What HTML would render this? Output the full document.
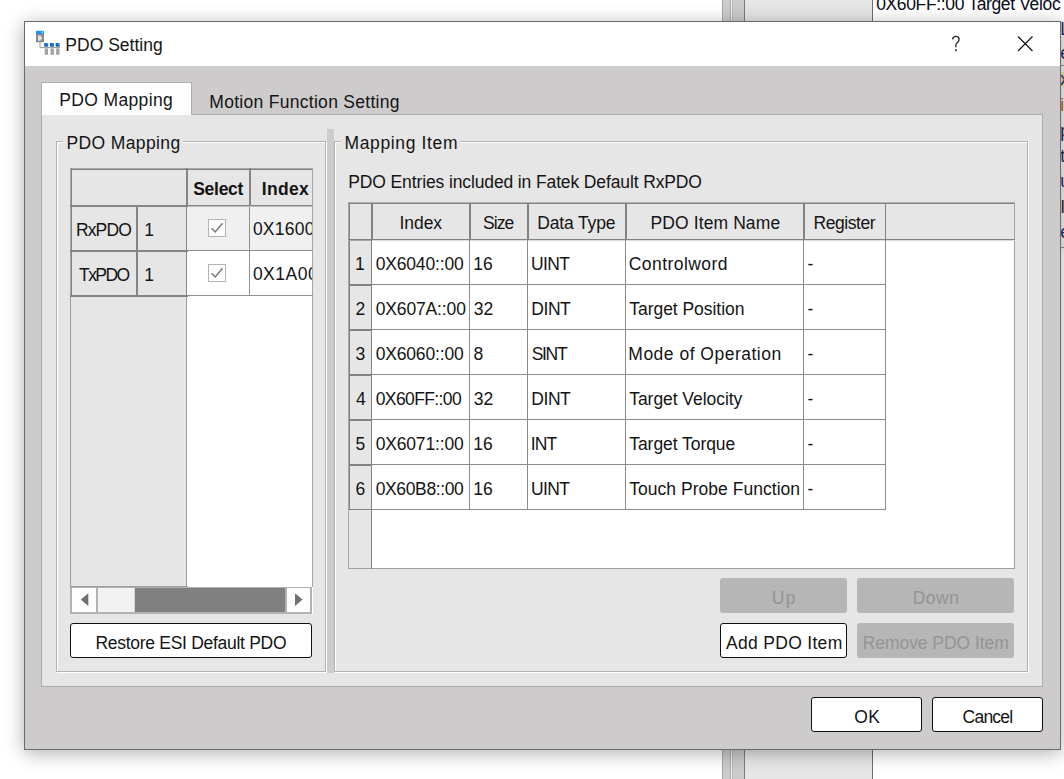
<!DOCTYPE html>
<html><head><meta charset="utf-8"><title>PDO Setting</title>
<style>
html,body{margin:0;padding:0;}
body{width:1064px;height:779px;overflow:hidden;background:#fff;position:relative;font-family:"Liberation Sans",sans-serif;}
.a{position:absolute;box-sizing:border-box;}
.t{position:absolute;white-space:nowrap;line-height:24px;height:24px;font-family:"Liberation Sans",sans-serif;}
.ln{position:absolute;background:#858585;}
.btn{position:absolute;box-sizing:border-box;background:#fff;border:1.5px solid #101010;border-radius:3px;}
.dis{position:absolute;box-sizing:border-box;background:#b6b6b6;border-radius:3px;}
</style></head><body>
<!-- background window behind dialog -->
<div class="a" style="left:722px;top:0;width:9px;height:779px;background:#cdcbcb;border-left:1px solid #a9a9a9;border-right:1px solid #a9a9a9;"></div>
<div class="a" style="left:731px;top:0;width:1px;height:779px;background:#f6f6f6;"></div>
<div class="a" style="left:732px;top:0;width:13px;height:779px;background:#cdcbcb;border-left:1px solid #b5b5b5;border-right:1px solid #7d7d7d;"></div>
<div class="a" style="left:745px;top:0;width:127px;height:779px;background:#e6e6e6;"></div>
<div class="a" style="left:872px;top:0;width:1px;height:779px;background:#6e6e6e;"></div>
<!-- right edge letter fragments -->
<div class="a" id="frag" style="left:1061px;top:0;width:3px;height:260px;overflow:hidden;">
 <div class="a" style="left:0;top:21px;width:3px;height:230px;background:#f4f4f4;"></div>
 <div class="a" style="left:0;top:72px;width:3px;height:15px;background:#f3e7a8;"></div>
 <div class="a" style="left:0;top:65px;width:3px;height:1px;background:#8a8a8a;"></div>
 <div class="a" style="left:0;top:247px;width:3px;height:1px;background:#8a8a8a;"></div>
 <span class="t" style="left:-0.7px;top:16.5px;font-size:17.5px;color:#1b2d6a;">L</span>
 <span class="t" style="left:-0.7px;top:41px;font-size:17.5px;color:#1b2d6a;">e</span>
 <span class="t" style="left:-0.7px;top:67px;font-size:17.5px;color:#1b2d6a;">x</span>
 <span class="t" style="left:-0.7px;top:92.5px;font-size:17.5px;color:#b8600f;">i</span>
 <span class="t" style="left:-0.7px;top:118.5px;font-size:17.5px;color:#1b2d6a;">p</span>
 <span class="t" style="left:-0.7px;top:143.5px;font-size:17.5px;color:#1b2d6a;">t</span>
 <span class="t" style="left:-0.7px;top:169px;font-size:17.5px;color:#1b2d6a;">u</span>
 <span class="t" style="left:-0.7px;top:194.5px;font-size:17.5px;color:#3a2a3a;">I</span>
 <span class="t" style="left:-0.7px;top:220px;font-size:17.5px;color:#1b2d6a;">e</span>
</div>

<!-- dialog -->
<div class="a" id="dlg" style="left:24px;top:21px;width:1037px;height:729px;border:1px solid #6a6a6a;background:#cdcbcb;box-shadow:0 3px 18px 0 rgba(0,0,0,0.32);"></div>
<div class="a" style="left:25px;top:22px;width:1035px;height:44px;background:#fff;"></div>

<!-- title icon -->
<svg class="a" style="left:34px;top:29px;" width="28" height="28" viewBox="0 0 28 28">
 <rect x="2" y="1.8" width="8" height="3.2" fill="#1e90ff"/>
 <rect x="7.8" y="2.6" width="1.2" height="1.2" fill="#fff"/>
 <rect x="2" y="5" width="8" height="8.3" fill="#8c8c8c"/>
 <path d="M4 6.6 H6.4 L8.2 9.1 L6.4 11.7 H4 Z" fill="#e2e2e2"/>
 <path d="M6 13.3 V18.6 H26" fill="none" stroke="#9a9a9a" stroke-width="1"/>
 <rect x="10.2" y="14" width="4" height="3.7" fill="#1565c0"/>
 <rect x="16" y="14" width="4" height="3.7" fill="#1565c0"/>
 <rect x="21.6" y="14" width="4" height="3.7" fill="#1565c0"/>
 <path d="M12.6 14.6 h1.2 v1 h-1.2z M18.4 14.6 h1.2 v1 h-1.2z M24 14.6 h1.2 v1 h-1.2z" fill="#9cc4ee"/>
 <g fill="#b5b5b5">
  <rect x="10.8" y="19.2" width="3.2" height="6.6"/>
  <rect x="16.6" y="19.2" width="3.2" height="6.6"/>
  <rect x="22.2" y="19.2" width="3.2" height="6.6"/>
 </g>
 <g fill="#8f8f8f">
  <rect x="10.8" y="20.4" width="3.2" height="0.9"/><rect x="10.8" y="22.3" width="3.2" height="0.9"/><rect x="10.8" y="24.2" width="3.2" height="0.9"/>
  <rect x="16.6" y="20.4" width="3.2" height="0.9"/><rect x="16.6" y="22.3" width="3.2" height="0.9"/><rect x="16.6" y="24.2" width="3.2" height="0.9"/>
  <rect x="22.2" y="20.4" width="3.2" height="0.9"/><rect x="22.2" y="22.3" width="3.2" height="0.9"/><rect x="22.2" y="24.2" width="3.2" height="0.9"/>
 </g>
</svg>

<!-- title buttons -->
<svg class="a" style="left:940px;top:28px;" width="110" height="32" viewBox="0 0 110 32">
 <path d="M78 8.5 L92.5 23 M92.5 8.5 L78 23" stroke="#111" stroke-width="1.2" fill="none"/>
 <path d="M12.6 11.4 C12.8 9.3 14.2 8.4 15.9 8.4 C17.9 8.4 19.1 9.6 19.1 11.3 C19.1 13 18.1 13.9 17.1 14.9 C16.2 15.8 15.8 16.6 15.8 17.6 V19.2" stroke="#222" stroke-width="1.3" fill="none"/>
 <rect x="15" y="21.4" width="1.7" height="1.7" fill="#222"/>
</svg>


<!-- tab panel -->
<div class="a" style="left:41px;top:114px;width:1002px;height:573px;background:#e6e6e6;border:1px solid #ababab;"></div>
<!-- selected tab -->
<div class="a" style="left:41px;top:82px;width:151px;height:33px;background:#fefefe;border:1px solid #adadad;border-bottom:none;"></div>

<!-- left group box -->
<div class="a" style="left:56px;top:141px;width:270px;height:531px;border:1px solid #b2b2b2;box-shadow:inset 1px 1px 0 #fff, 1px 1px 0 #fff;"></div>
<div class="a" style="left:63px;top:139px;width:120px;height:6px;background:#e6e6e6;"></div>
<!-- splitter -->
<div class="a" style="left:327px;top:129px;width:7px;height:544px;background:#cdcbcb;"></div>
<!-- right group box -->
<div class="a" style="left:334px;top:141px;width:694px;height:531px;border:1px solid #b2b2b2;box-shadow:inset 1px 1px 0 #fff, 1px 1px 0 #fff;"></div>
<div class="a" style="left:341px;top:139px;width:119px;height:6px;background:#e6e6e6;"></div>

<!-- LEFT TABLE -->
<div class="a" id="lt" style="left:70px;top:168px;width:243px;height:446px;background:#fff;overflow:hidden;">
 <!-- header bg -->
 <div class="a" style="left:0;top:0;width:243px;height:38px;background:#e6e6e6;"></div>
 <!-- row headers bg -->
 <div class="a" style="left:0;top:38px;width:117px;height:381px;background:#e6e6e6;"></div>
 <!-- selected row 1 -->
 <div class="a" style="left:117px;top:39px;width:126px;height:43px;background:#f0f0f0;"></div>
 <!-- grid lines (2px header style) -->
 <div class="ln" style="left:0;top:0;width:243px;height:1px;background:#a8a8a8;"></div>
 <div class="ln" style="left:0;top:1px;width:243px;height:1px;background:#828282;"></div>
 <div class="ln" style="left:0;top:0;width:1px;height:129px;background:#a8a8a8;"></div>
 <div class="ln" style="left:1px;top:0;width:1px;height:129px;background:#828282;"></div>
 <div class="ln" style="left:0;top:129px;width:1px;height:290px;background:#9b9b9b;"></div>
 <div class="ln" style="left:242px;top:0;width:1px;height:419px;background:#a6a6a6;"></div>
 <div class="ln" style="left:0;top:37px;width:118px;height:2px;"></div>
 <div class="ln" style="left:118px;top:37px;width:125px;height:1px;"></div>
 <div class="ln" style="left:118px;top:38px;width:125px;height:1px;background:#bdbdbd;"></div>
 <div class="ln" style="left:116px;top:0;width:2px;height:39px;"></div>
 <div class="ln" style="left:116px;top:39px;width:1px;height:90px;"></div>
 <div class="ln" style="left:116px;top:129px;width:1px;height:290px;background:#9b9b9b;"></div>
 <div class="ln" style="left:179px;top:0;width:2px;height:38px;"></div>
 <div class="ln" style="left:66px;top:38px;width:2px;height:90px;"></div>
 <div class="ln" style="left:0;top:82px;width:118px;height:2px;"></div>
 <div class="ln" style="left:0;top:127px;width:118px;height:2px;"></div>
 <div class="ln" style="left:117px;top:82px;width:126px;height:1px;background:#8e8e8e;"></div>
 <div class="ln" style="left:117px;top:127px;width:126px;height:1px;background:#8e8e8e;"></div>
 <div class="ln" style="left:179px;top:39px;width:1px;height:89px;background:#8e8e8e;"></div>
 <div class="ln" style="left:0;top:418px;width:118px;height:1px;background:#9b9b9b;"></div>
 <!-- checkboxes -->
 <div class="a" style="left:138px;top:51px;width:18px;height:18px;border:1px solid #b3b3b3;background:#fff;"></div>
 <div class="a" style="left:138px;top:96px;width:18px;height:18px;border:1px solid #b3b3b3;background:#fff;"></div>
 <svg class="a" style="left:138px;top:51px;" width="18" height="18" viewBox="0 0 18 18"><path d="M3.5 9.2 L7.2 13 L14.6 4.2" fill="none" stroke="#7a7a7a" stroke-width="1.5"/></svg>
 <svg class="a" style="left:138px;top:96px;" width="18" height="18" viewBox="0 0 18 18"><path d="M3.5 9.2 L7.2 13 L14.6 4.2" fill="none" stroke="#7a7a7a" stroke-width="1.5"/></svg>
 <!-- scrollbar -->
 <div class="a" style="left:0;top:419px;width:242px;height:27px;background:#b2b2b2;"></div>
 <div class="a" style="left:2px;top:420px;width:24px;height:24px;background:#fdfdfd;"></div>
 <div class="a" style="left:28px;top:420px;width:36px;height:24px;background:#f2f2f2;"></div>
 <div class="a" style="left:64px;top:420px;width:1px;height:24px;background:#d6d6d6;"></div>
 <div class="a" style="left:65px;top:420px;width:150px;height:24px;background:#808080;"></div>
 <div class="a" style="left:217px;top:420px;width:23px;height:24px;background:#fdfdfd;"></div>
 <svg class="a" style="left:0;top:419px;" width="242" height="27" viewBox="0 0 242 27"><path d="M10.8 12.5 L18.3 6.2 V18.9 Z" fill="#707070"/><path d="M232.5 12.5 L225 6.2 V18.9 Z" fill="#707070"/></svg>
</div>

<!-- Restore button -->
<div class="btn" style="left:70px;top:623px;width:242px;height:35px;"></div>

<!-- RIGHT TABLE -->
<div class="a" id="rt" style="left:348px;top:202px;width:667px;height:367px;background:#fff;overflow:hidden;">
 <div class="a" style="left:0;top:0;width:667px;height:38px;background:#e6e6e6;"></div>
 <div class="a" style="left:0;top:38px;width:23px;height:329px;background:#e6e6e6;"></div>
 <!-- outer -->
 <div class="ln" style="left:0;top:0;width:667px;height:1px;background:#b2b2b2;"></div>
 <div class="ln" style="left:0;top:1px;width:667px;height:1px;background:#828282;"></div>
 <div class="ln" style="left:0;top:0;width:1px;height:367px;background:#a6a6a6;"></div>
 <div class="ln" style="left:1px;top:1px;width:1px;height:307px;background:#828282;"></div>
 <div class="ln" style="left:0;top:366px;width:667px;height:1px;background:#a0a0a0;"></div>
 <div class="ln" style="left:666px;top:0;width:1px;height:367px;background:#a0a0a0;"></div>
 <!-- header verticals (2px) -->
 <div class="ln" style="left:23px;top:1px;width:2px;height:37px;background:#828282;"></div>
 <div class="ln" style="left:121px;top:1px;width:2px;height:37px;background:#828282;"></div>
 <div class="ln" style="left:179px;top:1px;width:2px;height:37px;background:#828282;"></div>
 <div class="ln" style="left:277px;top:1px;width:2px;height:37px;background:#828282;"></div>
 <div class="ln" style="left:455px;top:1px;width:2px;height:37px;background:#828282;"></div>
 <div class="ln" style="left:537px;top:1px;width:1px;height:37px;background:#828282;"></div>
 <!-- header bottom -->
 <div class="ln" style="left:0;top:37px;width:667px;height:1px;background:#828282;"></div>
 <div class="ln" style="left:0;top:38px;width:24px;height:1px;background:#a5a5a5;"></div>
 <div class="ln" style="left:24px;top:38px;width:643px;height:1px;background:#dadada;"></div>
 <!-- data verticals (1px) -->
 <div class="ln" style="left:23px;top:38px;width:1px;height:329px;background:#828282;"></div>
 <div class="ln" style="left:121px;top:38px;width:1px;height:270px;background:#8c8c8c;"></div>
 <div class="ln" style="left:179px;top:38px;width:1px;height:270px;background:#8c8c8c;"></div>
 <div class="ln" style="left:277px;top:38px;width:1px;height:270px;background:#8c8c8c;"></div>
 <div class="ln" style="left:455px;top:38px;width:1px;height:270px;background:#8c8c8c;"></div>
 <div class="ln" style="left:537px;top:38px;width:1px;height:270px;background:#8c8c8c;"></div>
 <!-- row lines -->
 <div class="ln" style="left:1px;top:82px;width:23px;height:2px;background:#828282;"></div>
 <div class="ln" style="left:24px;top:82px;width:514px;height:1px;background:#8c8c8c;"></div>
 <div class="ln" style="left:1px;top:127px;width:23px;height:2px;background:#828282;"></div>
 <div class="ln" style="left:24px;top:127px;width:514px;height:1px;background:#8c8c8c;"></div>
 <div class="ln" style="left:1px;top:172px;width:23px;height:2px;background:#828282;"></div>
 <div class="ln" style="left:24px;top:172px;width:514px;height:1px;background:#8c8c8c;"></div>
 <div class="ln" style="left:1px;top:217px;width:23px;height:2px;background:#828282;"></div>
 <div class="ln" style="left:24px;top:217px;width:514px;height:1px;background:#8c8c8c;"></div>
 <div class="ln" style="left:1px;top:262px;width:23px;height:2px;background:#828282;"></div>
 <div class="ln" style="left:24px;top:262px;width:514px;height:1px;background:#8c8c8c;"></div>
 <div class="ln" style="left:1px;top:307px;width:23px;height:1px;background:#828282;"></div>
 <div class="ln" style="left:24px;top:307px;width:514px;height:1px;background:#8c8c8c;"></div>
</div>

<!-- buttons right -->
<div class="dis" style="left:720px;top:578px;width:127px;height:35px;"></div>
<div class="dis" style="left:857px;top:578px;width:157px;height:35px;"></div>
<div class="btn" style="left:720px;top:623px;width:127px;height:35px;"></div>
<div class="dis" style="left:857px;top:623px;width:157px;height:35px;"></div>
<div class="btn" style="left:811px;top:697px;width:111px;height:35px;"></div>
<div class="btn" style="left:932px;top:697px;width:111px;height:35px;"></div>

<span class="t" id="t0" style="left:65.29px;top:33.14px;font-size:17.5px;color:#141414;letter-spacing:0.022px;">PDO Setting</span>
<span class="t" id="t1" style="left:59.29px;top:87.94px;font-size:17.5px;color:#141414;letter-spacing:0.354px;">PDO Mapping</span>
<span class="t" id="t2" style="left:209.29px;top:89.74px;font-size:17.5px;color:#141414;letter-spacing:0.291px;">Motion Function Setting</span>
<span class="t" id="t3" style="left:66.49px;top:130.94px;font-size:17.5px;color:#141414;letter-spacing:0.372px;">PDO Mapping</span>
<span class="t" id="t4" style="left:344.49px;top:130.94px;font-size:17.5px;color:#141414;letter-spacing:0.633px;">Mapping Item</span>
<span class="t" id="t5" style="left:348.29px;top:170.24px;font-size:17.5px;color:#141414;letter-spacing:-0.124px;">PDO Entries included in Fatek Default RxPDO</span>
<span class="t" id="t6" style="left:193.24px;top:176.64px;font-size:17.5px;color:#141414;letter-spacing:-0.283px;font-weight:bold;">Select</span>
<span class="t" id="t7" style="left:261.86px;top:176.64px;font-size:17.5px;color:#141414;letter-spacing:0.278px;font-weight:bold;width:50.1px;overflow:hidden;">Index</span>
<span class="t" id="t8" style="left:76.00px;top:217.94px;font-size:17.5px;color:#141414;letter-spacing:-0.888px;">RxPDO</span>
<span class="t" id="t9" style="left:144.36px;top:217.94px;font-size:17.5px;color:#141414;letter-spacing:0.000px;">1</span>
<span class="t" id="t10" style="left:79.05px;top:262.64px;font-size:17.5px;color:#141414;letter-spacing:-1.570px;">TxPDO</span>
<span class="t" id="t11" style="left:144.36px;top:262.64px;font-size:17.5px;color:#141414;letter-spacing:0.000px;">1</span>
<span class="t" id="t12" style="left:252.89px;top:216.94px;font-size:17.5px;color:#141414;letter-spacing:0.232px;width:59.1px;overflow:hidden;">0X1600</span>
<span class="t" id="t13" style="left:252.89px;top:261.94px;font-size:17.5px;color:#141414;letter-spacing:0.509px;width:59.1px;overflow:hidden;">0X1A00</span>
<span class="t" id="t14" style="left:399.40px;top:210.94px;font-size:17.5px;color:#141414;letter-spacing:-0.022px;">Index</span>
<span class="t" id="t15" style="left:483.01px;top:210.94px;font-size:17.5px;color:#141414;letter-spacing:-0.965px;">Size</span>
<span class="t" id="t16" style="left:537.29px;top:210.94px;font-size:17.5px;color:#141414;letter-spacing:-0.159px;">Data Type</span>
<span class="t" id="t17" style="left:650.49px;top:210.94px;font-size:17.5px;color:#141414;letter-spacing:0.107px;">PDO Item Name</span>
<span class="t" id="t18" style="left:813.49px;top:210.94px;font-size:17.5px;color:#141414;letter-spacing:-0.452px;">Register</span>
<span class="t" id="t19" style="left:355.06px;top:251.74px;font-size:17.5px;color:#141414;letter-spacing:0.000px;">1</span>
<span class="t" id="t20" style="left:375.70px;top:251.74px;font-size:17.5px;color:#141414;letter-spacing:-0.171px;">0X6040::00</span>
<span class="t" id="t21" style="left:473.36px;top:251.74px;font-size:17.5px;color:#141414;letter-spacing:0.000px;">16</span>
<span class="t" id="t22" style="left:531.07px;top:251.74px;font-size:17.5px;color:#141414;letter-spacing:-0.618px;">UINT</span>
<span class="t" id="t23" style="left:628.81px;top:251.74px;font-size:17.5px;color:#141414;letter-spacing:0.434px;">Controlword</span>
<span class="t" id="t24" style="left:355.52px;top:296.74px;font-size:17.5px;color:#141414;letter-spacing:0.000px;">2</span>
<span class="t" id="t25" style="left:375.70px;top:296.74px;font-size:17.5px;color:#141414;letter-spacing:-0.140px;">0X607A::00</span>
<span class="t" id="t26" style="left:473.81px;top:296.74px;font-size:17.5px;color:#141414;letter-spacing:0.000px;">32</span>
<span class="t" id="t27" style="left:531.29px;top:296.74px;font-size:17.5px;color:#141414;letter-spacing:-0.452px;">DINT</span>
<span class="t" id="t28" style="left:629.26px;top:296.74px;font-size:17.5px;color:#141414;letter-spacing:-0.041px;">Target Position</span>
<span class="t" id="t29" style="left:355.52px;top:341.74px;font-size:17.5px;color:#141414;letter-spacing:0.000px;">3</span>
<span class="t" id="t30" style="left:375.70px;top:341.74px;font-size:17.5px;color:#141414;letter-spacing:-0.171px;">0X6060::00</span>
<span class="t" id="t31" style="left:473.58px;top:341.74px;font-size:17.5px;color:#141414;letter-spacing:0.000px;">8</span>
<span class="t" id="t32" style="left:531.64px;top:341.74px;font-size:17.5px;color:#141414;letter-spacing:-1.303px;">SINT</span>
<span class="t" id="t33" style="left:628.32px;top:341.74px;font-size:17.5px;color:#141414;letter-spacing:0.496px;">Mode of Operation</span>
<span class="t" id="t34" style="left:355.98px;top:386.74px;font-size:17.5px;color:#141414;letter-spacing:0.000px;">4</span>
<span class="t" id="t35" style="left:375.70px;top:386.74px;font-size:17.5px;color:#141414;letter-spacing:-0.605px;">0X60FF::00</span>
<span class="t" id="t36" style="left:473.81px;top:386.74px;font-size:17.5px;color:#141414;letter-spacing:0.000px;">32</span>
<span class="t" id="t37" style="left:531.29px;top:386.74px;font-size:17.5px;color:#141414;letter-spacing:-0.452px;">DINT</span>
<span class="t" id="t38" style="left:629.26px;top:386.74px;font-size:17.5px;color:#141414;letter-spacing:-0.055px;">Target Velocity</span>
<span class="t" id="t39" style="left:355.47px;top:431.74px;font-size:17.5px;color:#141414;letter-spacing:0.000px;">5</span>
<span class="t" id="t40" style="left:375.70px;top:431.74px;font-size:17.5px;color:#141414;letter-spacing:-0.171px;">0X6071::00</span>
<span class="t" id="t41" style="left:473.36px;top:431.74px;font-size:17.5px;color:#141414;letter-spacing:0.000px;">16</span>
<span class="t" id="t42" style="left:530.76px;top:431.74px;font-size:17.5px;color:#141414;letter-spacing:-0.925px;">INT</span>
<span class="t" id="t43" style="left:629.26px;top:431.74px;font-size:17.5px;color:#141414;letter-spacing:-0.057px;">Target Torque</span>
<span class="t" id="t44" style="left:355.61px;top:476.74px;font-size:17.5px;color:#141414;letter-spacing:0.000px;">6</span>
<span class="t" id="t45" style="left:375.70px;top:476.74px;font-size:17.5px;color:#141414;letter-spacing:-0.369px;">0X60B8::00</span>
<span class="t" id="t46" style="left:473.36px;top:476.74px;font-size:17.5px;color:#141414;letter-spacing:0.000px;">16</span>
<span class="t" id="t47" style="left:531.07px;top:476.74px;font-size:17.5px;color:#141414;letter-spacing:-0.618px;">UINT</span>
<span class="t" id="t48" style="left:629.26px;top:476.74px;font-size:17.5px;color:#141414;letter-spacing:0.031px;">Touch Probe Function</span>
<span class="t" id="t49" style="left:95.49px;top:631.24px;font-size:17.5px;color:#141414;letter-spacing:-0.291px;">Restore ESI Default PDO</span>
<span class="t" id="t50" style="left:771.86px;top:586.44px;font-size:17.5px;color:#949494;letter-spacing:1.178px;">Up</span>
<span class="t" id="t51" style="left:912.71px;top:586.44px;font-size:17.5px;color:#949494;letter-spacing:0.479px;">Down</span>
<span class="t" id="t52" style="left:725.93px;top:631.44px;font-size:17.5px;color:#141414;letter-spacing:0.316px;">Add PDO Item</span>
<span class="t" id="t53" style="left:862.71px;top:631.44px;font-size:17.5px;color:#949494;letter-spacing:-0.052px;">Remove PDO Item</span>
<span class="t" id="t54" style="left:854.13px;top:705.14px;font-size:17.5px;color:#141414;letter-spacing:0.398px;">OK</span>
<span class="t" id="t55" style="left:962.52px;top:705.14px;font-size:17.5px;color:#141414;letter-spacing:-0.749px;">Cancel</span>
<span class="t" id="t56" style="left:876.17px;top:-7.66px;font-size:17.5px;color:#0a0a20;letter-spacing:-0.355px;">0X60FF::00 Target Veloc</span>
<span class="t" id="t57" style="left:807.60px;top:251.74px;font-size:17.5px;color:#141414;letter-spacing:0.000px;">-</span>
<span class="t" id="t58" style="left:807.60px;top:296.74px;font-size:17.5px;color:#141414;letter-spacing:0.000px;">-</span>
<span class="t" id="t59" style="left:807.60px;top:341.74px;font-size:17.5px;color:#141414;letter-spacing:0.000px;">-</span>
<span class="t" id="t60" style="left:807.60px;top:386.74px;font-size:17.5px;color:#141414;letter-spacing:0.000px;">-</span>
<span class="t" id="t61" style="left:807.60px;top:431.74px;font-size:17.5px;color:#141414;letter-spacing:0.000px;">-</span>
<span class="t" id="t62" style="left:807.60px;top:476.74px;font-size:17.5px;color:#141414;letter-spacing:0.000px;">-</span>
</body></html>
